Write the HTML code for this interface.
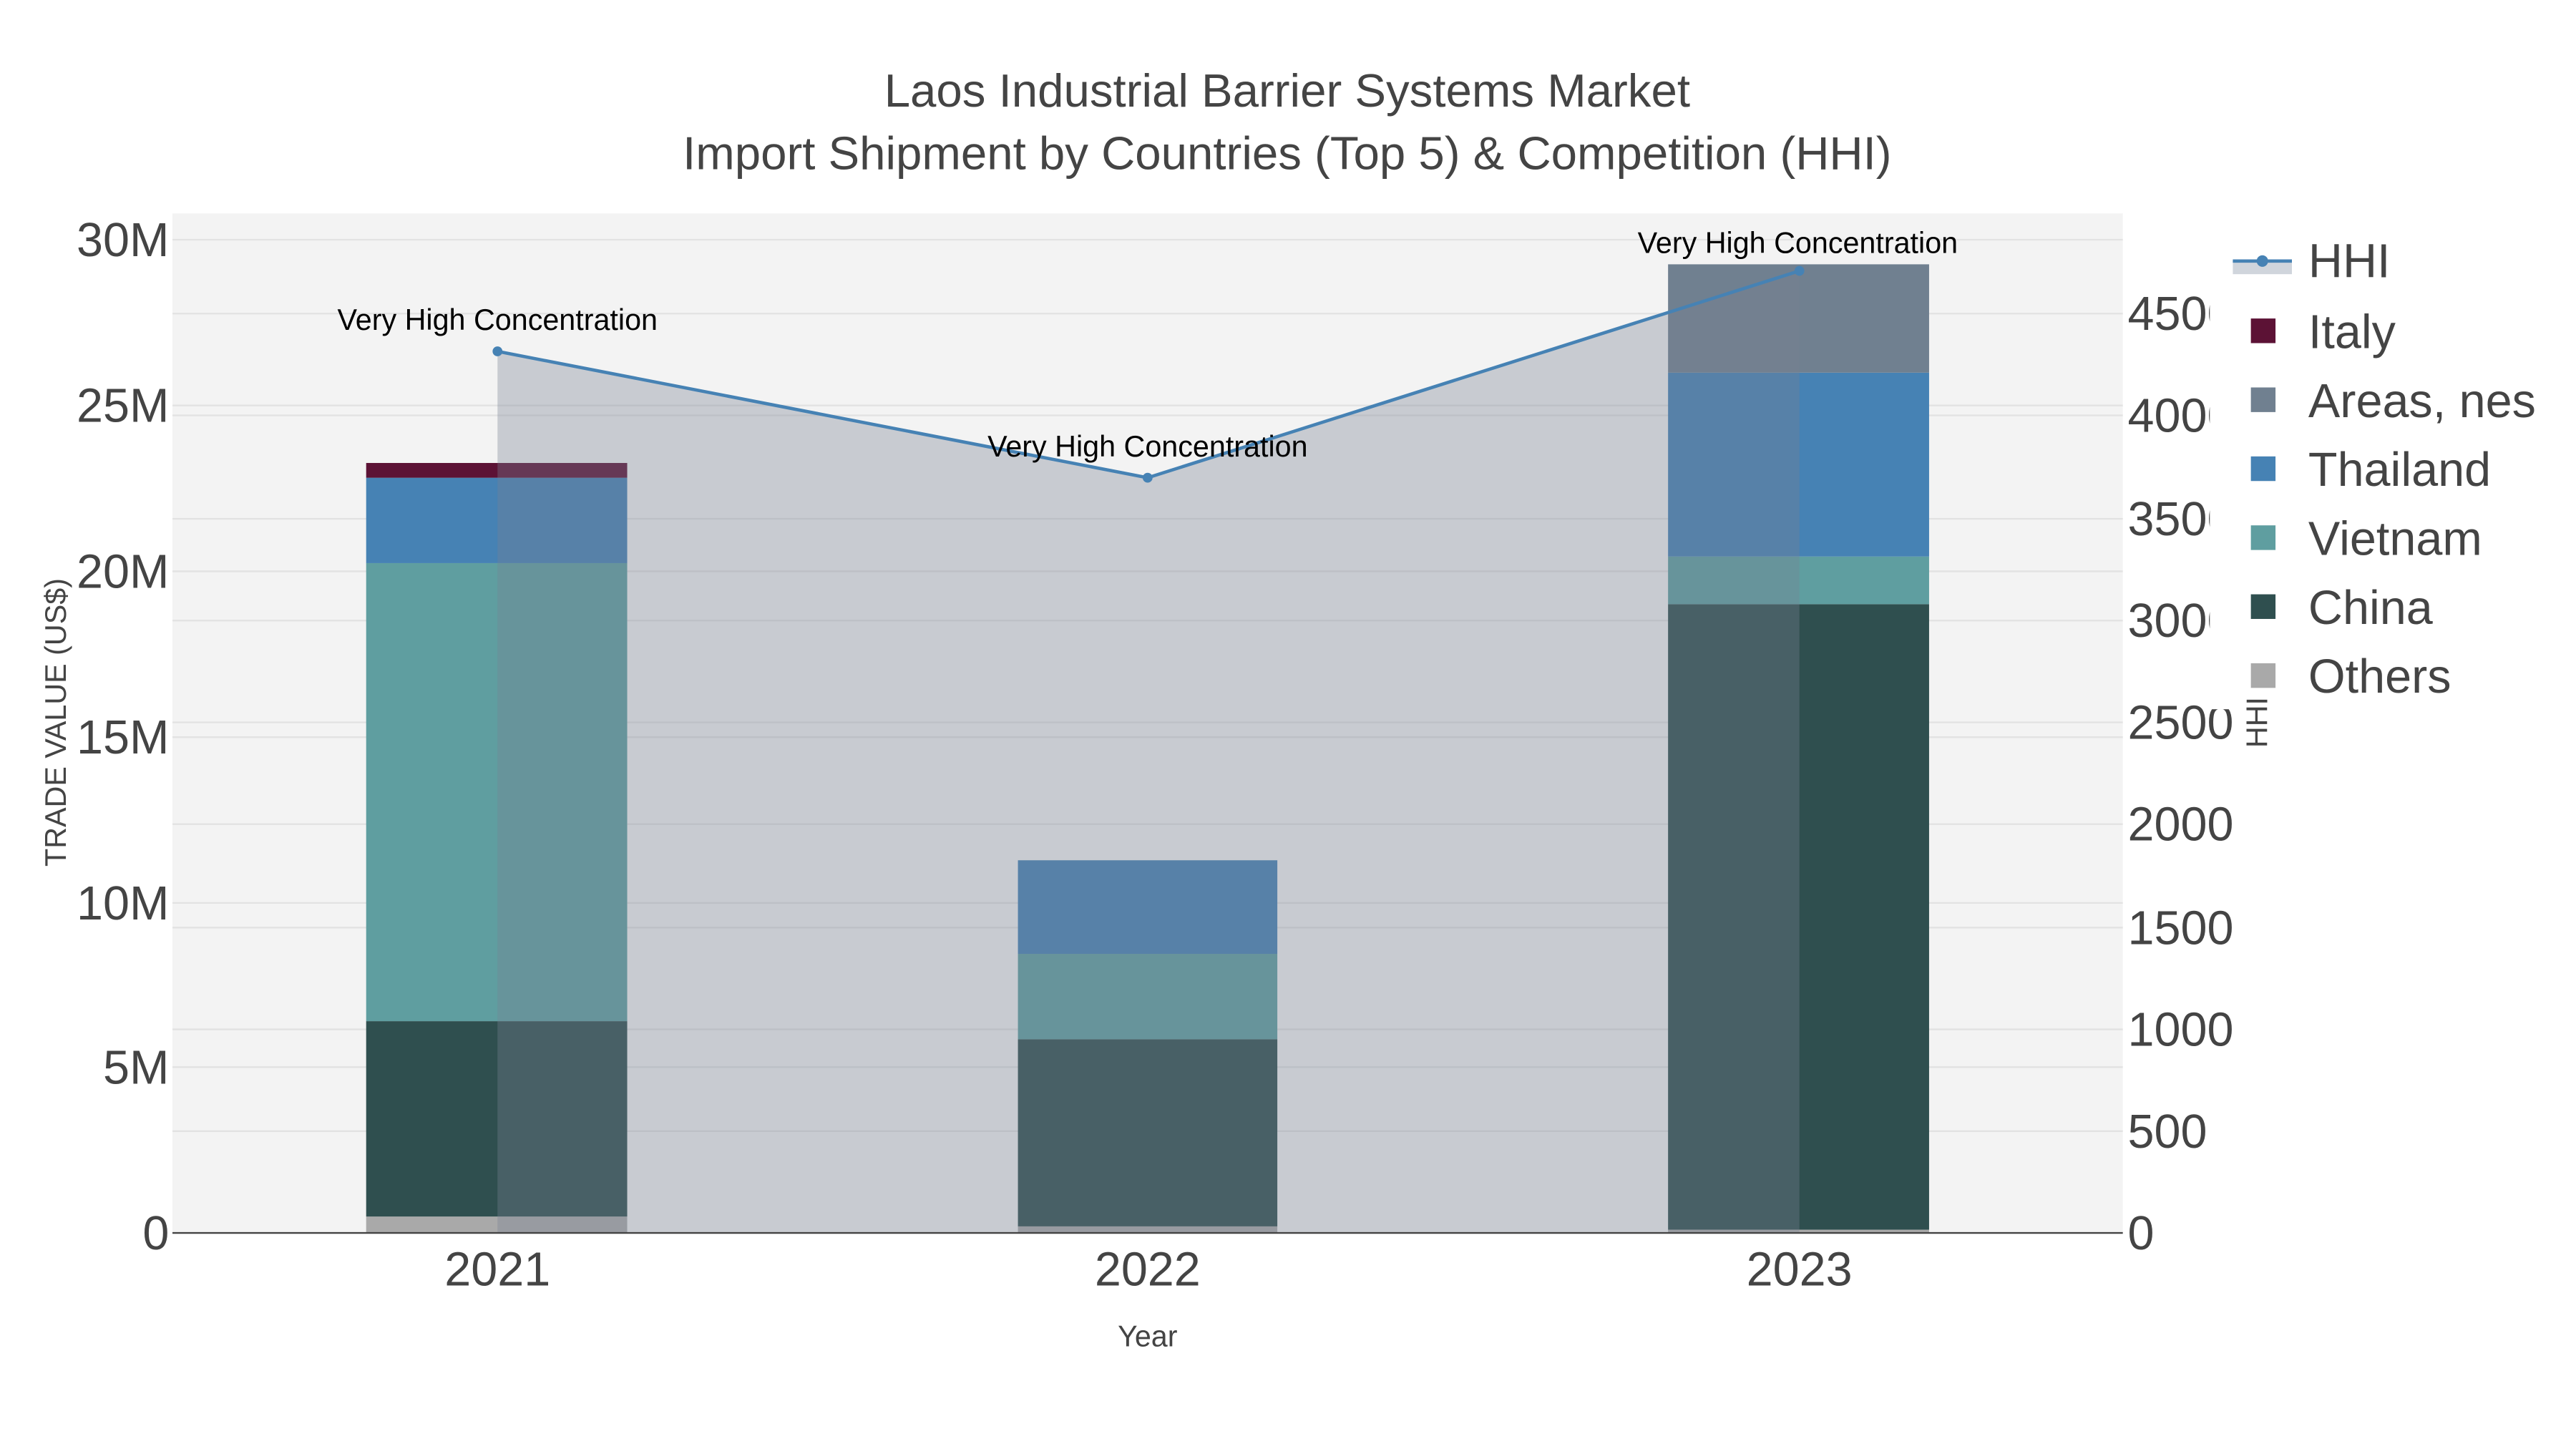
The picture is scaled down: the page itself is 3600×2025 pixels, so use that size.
<!DOCTYPE html>
<html><head><meta charset="utf-8"><style>html,body{margin:0;padding:0;background:#fff}svg{display:block}</style></head>
<body>
<svg width="3600" height="2025" viewBox="0 0 1569 882.6" xmlns="http://www.w3.org/2000/svg" font-family="Liberation Sans, Arial, sans-serif">
<rect x="0" y="0" width="1569" height="882.6" fill="#fff"/>
<rect x="105" y="130" width="1188" height="621" fill="#f3f3f3"/>
<g stroke="#e2e2e2" stroke-width="1">
<line x1="105" x2="1293" y1="146" y2="146"/><line x1="105" x2="1293" y1="247" y2="247"/><line x1="105" x2="1293" y1="348" y2="348"/><line x1="105" x2="1293" y1="449" y2="449"/><line x1="105" x2="1293" y1="550" y2="550"/><line x1="105" x2="1293" y1="650" y2="650"/>
<line x1="105" x2="1293" y1="689" y2="689"/><line x1="105" x2="1293" y1="627" y2="627"/><line x1="105" x2="1293" y1="565" y2="565"/><line x1="105" x2="1293" y1="502" y2="502"/><line x1="105" x2="1293" y1="440" y2="440"/><line x1="105" x2="1293" y1="378" y2="378"/><line x1="105" x2="1293" y1="316" y2="316"/><line x1="105" x2="1293" y1="253" y2="253"/><line x1="105" x2="1293" y1="191" y2="191"/>
</g>
<rect x="223" y="741" width="159" height="10" fill="#a9a9a9"/>
<rect x="223" y="622" width="159" height="119" fill="#2f4f4f"/>
<rect x="223" y="343" width="159" height="279" fill="#5f9ea0"/>
<rect x="223" y="291" width="159" height="52" fill="#4682b4"/>
<rect x="223" y="282" width="159" height="9" fill="#5c1235"/>
<rect x="620" y="747" width="158" height="4" fill="#a9a9a9"/>
<rect x="620" y="633" width="158" height="114" fill="#2f4f4f"/>
<rect x="620" y="581" width="158" height="52" fill="#5f9ea0"/>
<rect x="620" y="524" width="158" height="57" fill="#4682b4"/>
<rect x="1016" y="749" width="159" height="2" fill="#a9a9a9"/>
<rect x="1016" y="368" width="159" height="381" fill="#2f4f4f"/>
<rect x="1016" y="339" width="159" height="29" fill="#5f9ea0"/>
<rect x="1016" y="227" width="159" height="112" fill="#4682b4"/>
<rect x="1016" y="161" width="159" height="66" fill="#708090"/>
<polygon points="303,214 699,291 1096,165 1096,751 303,751" fill="rgb(120,130,146)" fill-opacity="0.35"/>
<line x1="105" x2="1293" y1="751" y2="751" stroke="#444" stroke-width="1"/>
<polyline points="303,214 699,291 1096,165" fill="none" stroke="#4682b4" stroke-width="2"/>
<circle cx="303" cy="214" r="3" fill="#4682b4"/><circle cx="699" cy="291" r="3" fill="#4682b4"/><circle cx="1096" cy="165" r="3" fill="#4682b4"/>
<g font-size="18" fill="#000" text-anchor="middle">
<text x="303" y="201">Very High Concentration</text>
<text x="699" y="278">Very High Concentration</text>
<text x="1095" y="154">Very High Concentration</text>
</g>
<g font-size="28.5" fill="#444" text-anchor="middle">
<text x="784" y="65">Laos Industrial Barrier Systems Market</text>
<text x="784" y="103">Import Shipment by Countries (Top 5) &amp; Competition (HHI)</text>
</g>
<g font-size="29" fill="#444" text-anchor="middle">
<text x="303" y="783">2021</text><text x="699" y="783">2022</text><text x="1096" y="783">2023</text>
</g>
<g font-size="29" fill="#444" text-anchor="end">
<text x="103" y="156">30M</text><text x="103" y="257">25M</text><text x="103" y="358">20M</text><text x="103" y="459">15M</text><text x="103" y="560">10M</text><text x="103" y="660">5M</text><text x="103" y="761">0</text>
</g>
<g font-size="29" fill="#444">
<text x="1296" y="761">0</text><text x="1296" y="699">500</text><text x="1296" y="637">1000</text><text x="1296" y="575">1500</text><text x="1296" y="512">2000</text><text x="1296" y="450">2500</text><text x="1296" y="388">3000</text><text x="1296" y="326">3500</text><text x="1296" y="263">4000</text><text x="1296" y="201">4500</text>
</g>
<text x="699" y="820" font-size="18" fill="#444" text-anchor="middle">Year</text>
<text transform="translate(40,440) rotate(-90)" font-size="18" fill="#444" text-anchor="middle">TRADE VALUE (US$)</text>
<rect x="1346" y="140" width="221" height="292" fill="#fff"/>
<text transform="translate(1381,440) rotate(-90)" font-size="18" fill="#444" text-anchor="middle">HHI</text>
<rect x="1360" y="159" width="36" height="8" fill="#d0d5dc"/>
<line x1="1360" x2="1396" y1="159" y2="159" stroke="#4682b4" stroke-width="2"/>
<circle cx="1378" cy="159" r="3.5" fill="#4682b4"/>
<rect x="1371" y="194" width="15" height="15" fill="#5c1235"/>
<rect x="1371" y="236" width="15" height="15" fill="#708090"/>
<rect x="1371" y="278" width="15" height="15" fill="#4682b4"/>
<rect x="1371" y="320" width="15" height="15" fill="#5f9ea0"/>
<rect x="1371" y="362" width="15" height="15" fill="#2f4f4f"/>
<rect x="1371" y="404" width="15" height="15" fill="#a9a9a9"/>
<g font-size="29" fill="#444">
<text x="1406" y="169">HHI</text><text x="1406" y="212">Italy</text><text x="1406" y="254">Areas, nes</text><text x="1406" y="296">Thailand</text><text x="1406" y="338">Vietnam</text><text x="1406" y="380">China</text><text x="1406" y="422">Others</text>
</g>
</svg>
</body></html>
